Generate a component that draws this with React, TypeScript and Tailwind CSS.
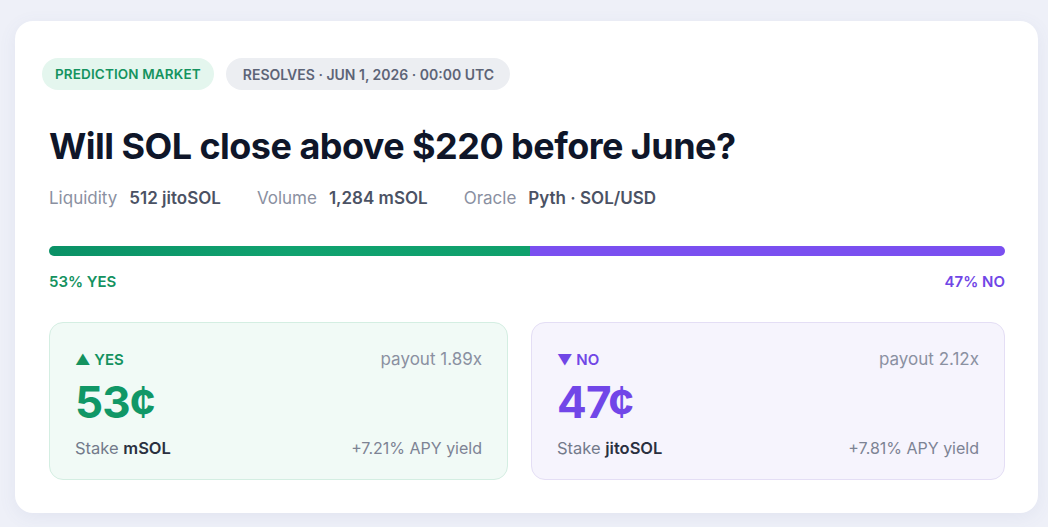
export default function App() {
  const yes = 53
  const no = 100 - yes
  // the bar in the design splits a little left of the true ratio
  const barSplit = 50.3

  return (
    <div className="min-h-[527px] w-full bg-[#eef0f8] pl-[15px] pr-[10px] pt-[21px] pb-[13px] font-['Inter',sans-serif]">
      <div className="rounded-[18px] bg-white pl-[34px] pr-[33px] pt-[37px] pb-[33px] shadow-[0_4px_18px_rgba(90,100,150,0.08)]">
        {/* tags */}
        <div className="flex items-center gap-[12px]">
          <span className="-ml-[7px] flex h-[32px] items-center rounded-full bg-[#e4f6ee] px-[13px] text-[13.5px] font-semibold tracking-[0.01em] text-[#15935f]">
            PREDICTION MARKET
          </span>
          <span className="flex h-[32px] items-center rounded-full bg-[#eceef2] pl-[17px] pr-[16px] text-[14px] font-semibold text-[#5d6477]">
            RESOLVES · JUN 1, 2026 · 00:00 UTC
          </span>
        </div>

        {/* question */}
        <h1 className="mt-[34px] text-[36px] leading-[44px] font-bold tracking-[-0.015em] text-[#0f1629]">
          Will SOL close above $220 before June?
        </h1>

        {/* meta */}
        <div className="mt-[19px] flex items-center gap-[36px] text-[17px] leading-[22px]">
          <div className="flex gap-[12px]">
            <span className="text-[#8a90a1]">Liquidity</span>
            <span className="font-semibold text-[#4b5264]">512 jitoSOL</span>
          </div>
          <div className="flex gap-[12px]">
            <span className="text-[#8a90a1]">Volume</span>
            <span className="font-semibold text-[#4b5264]">1,284 mSOL</span>
          </div>
          <div className="flex gap-[12px]">
            <span className="text-[#8a90a1]">Oracle</span>
            <span className="font-semibold text-[#4b5264]">Pyth · SOL/USD</span>
          </div>
        </div>

        {/* odds bar */}
        <div className="mt-[37px] flex h-[10px] w-full overflow-hidden rounded-full">
          <div className="h-full bg-gradient-to-r from-[#0a9166] via-[#10a26f] to-[#0fa06c]" style={{ width: `${barSplit}%` }} />
          <div className="h-full flex-1 bg-[#7a4ff0]" />
        </div>
        <div className="mt-[16px] flex justify-between text-[15px] leading-[20px] font-semibold">
          <span className="text-[#14925f]">{yes}% YES</span>
          <span className="text-[#7046e6]">{no}% NO</span>
        </div>

        {/* outcome cards */}
        <div className="mt-[30px] grid grid-cols-[459fr_474fr] gap-[23px]">
          <div className="rounded-[14px] border border-[#d4eee2] bg-[#f1faf6] px-[25px] pt-[26px] pb-[20px]">
            <div className="flex h-[22px] items-center justify-between">
              <span className="text-[15px] font-semibold text-[#14925f]">▲ YES</span>
              <span className="text-[17px] text-[#8a90a1]">payout 1.89x</span>
            </div>
            <div className="mt-[6px] text-[44px] leading-[50px] font-bold tracking-[-0.02em] text-[#109766]">53¢</div>
            <div className="mt-[10px] flex h-[22px] items-center justify-between">
              <span className="text-[16.5px] text-[#737a8b]">
                Stake <span className="font-semibold text-[#2a3040]">mSOL</span>
              </span>
              <span className="text-[16px] text-[#7d8394]">+7.21% APY yield</span>
            </div>
          </div>
          <div className="rounded-[14px] border border-[#e4def5] bg-[#f6f4fd] px-[25px] pt-[26px] pb-[20px]">
            <div className="flex h-[22px] items-center justify-between">
              <span className="text-[15px] font-semibold text-[#7046e6]">▼ NO</span>
              <span className="text-[17px] text-[#8a90a1]">payout 2.12x</span>
            </div>
            <div className="mt-[6px] text-[44px] leading-[50px] font-bold tracking-[-0.02em] text-[#7146e8]">47¢</div>
            <div className="mt-[10px] flex h-[22px] items-center justify-between">
              <span className="text-[16.5px] text-[#737a8b]">
                Stake <span className="font-semibold text-[#2a3040]">jitoSOL</span>
              </span>
              <span className="text-[16px] text-[#7d8394]">+7.81% APY yield</span>
            </div>
          </div>
        </div>
      </div>
    </div>
  )
}
